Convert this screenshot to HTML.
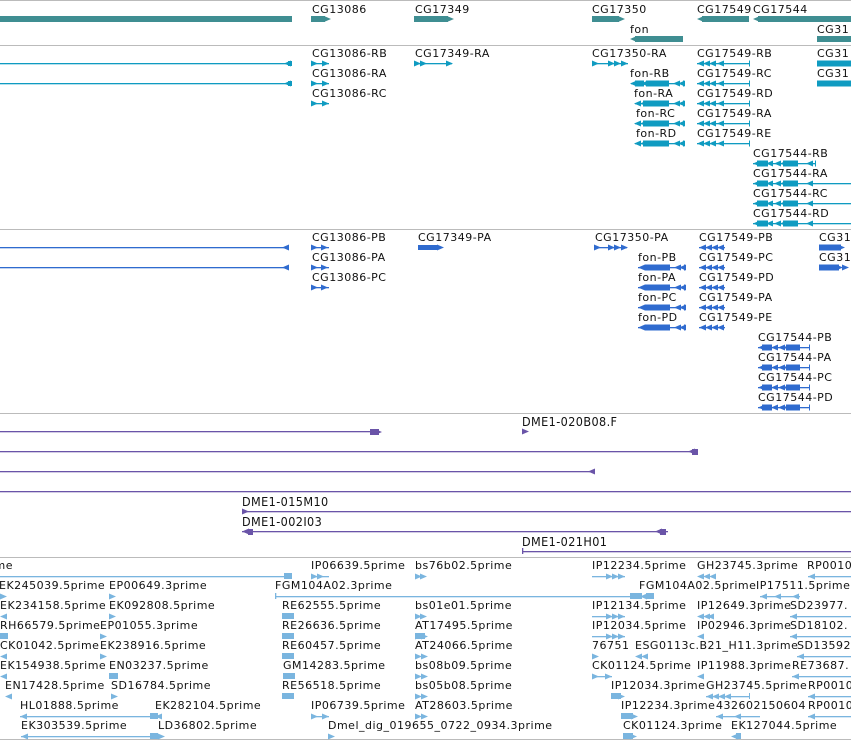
<!DOCTYPE html>
<html><head><meta charset="utf-8"><style>
html,body{margin:0;padding:0;background:#fff;width:851px;height:741px;overflow:hidden}
svg text{font-family:"DejaVu Sans","Liberation Sans",sans-serif;font-size:11px;fill:#111;letter-spacing:0.5px}
.p text{font-family:"DejaVu Sans Condensed","DejaVu Sans",sans-serif;font-stretch:condensed;font-size:12.5px;letter-spacing:0.4px}
</style></head><body>
<svg width="851" height="741" viewBox="0 0 851 741" xmlns="http://www.w3.org/2000/svg">
<defs>
<symbol id="ar" overflow="visible"><polygon points="0,-3 7,0 0,3"/></symbol>
<symbol id="al" overflow="visible"><polygon points="7,-3 0,0 7,3"/></symbol>
</defs>
<g fill="#bbb">
<rect x="0" y="0" width="851" height="1"/><rect x="0" y="45" width="851" height="1"/>
<rect x="0" y="229" width="851" height="1"/><rect x="0" y="413" width="851" height="1"/>
<rect x="0" y="557" width="851" height="1"/><rect x="0" y="739" width="851" height="1"/>
</g>

<g fill="#3f8e92">
<rect x="0" y="16" width="292" height="6"/>
<rect x="311" y="16" width="14" height="6"/><use href="#ar" x="324" y="19"/>
<rect x="414" y="16" width="34" height="6"/><use href="#ar" x="447" y="19"/>
<rect x="592" y="16" width="27" height="6"/><use href="#ar" x="618" y="19"/>
<use href="#al" x="697" y="19"/><rect x="702" y="16" width="47" height="6"/>
<use href="#al" x="753" y="19"/><rect x="758" y="16" width="93" height="6"/>
<use href="#al" x="630" y="39"/><rect x="635" y="36" width="48" height="6"/>
<rect x="817" y="36" width="34" height="6"/>
</g>
<text x="312" y="13">CG13086</text><text x="415" y="13">CG17349</text>
<text x="592" y="13">CG17350</text><text x="697" y="13">CG17549</text><text x="753" y="13">CG17544</text>
<text x="630" y="33">fon</text><text x="817" y="33">CG31</text>

<g fill="#0f9bc1" stroke="none">
<rect x="0" y="63" width="286" height="1.3"/><use href="#al" x="284" y="63.5"/><rect x="288" y="61" width="4" height="5"/>
<rect x="0" y="83" width="286" height="1.3"/><use href="#al" x="284" y="83.5"/><rect x="288" y="81" width="4" height="5"/>
<rect x="311" y="63" width="18" height="1.3"/><use href="#ar" x="311" y="63.5"/><use href="#ar" x="322" y="63.5"/>
<rect x="311" y="83" width="18" height="1.3"/><use href="#ar" x="311" y="83.5"/><use href="#ar" x="322" y="83.5"/>
<rect x="311" y="103" width="18" height="1.3"/><use href="#ar" x="311" y="103.5"/><use href="#ar" x="322" y="103.5"/>
<rect x="414" y="63" width="38" height="1.3"/><use href="#ar" x="414" y="63.5"/><use href="#ar" x="420" y="63.5"/><use href="#ar" x="446" y="63.5"/>
<rect x="592" y="63" width="36" height="1.3"/><use href="#ar" x="592" y="63.5"/><use href="#ar" x="608" y="63.5"/><use href="#ar" x="614" y="63.5"/><use href="#ar" x="621" y="63.5"/>
<g id="fonA">
<rect x="631" y="83" width="52" height="1.3"/><use href="#al" x="630" y="83.5"/><rect x="635" y="80.5" width="9" height="6"/><use href="#al" x="641" y="83.5"/><rect x="646" y="80.5" width="23" height="6"/><use href="#al" x="673" y="83.5"/><use href="#al" x="678" y="83.5"/><rect x="683" y="80.5" width="1" height="6"/>
</g>
<g id="fonB">
<rect x="635" y="103" width="49" height="1.3"/><use href="#al" x="634" y="103.5"/><rect x="643" y="100.5" width="26" height="6"/><use href="#al" x="640" y="103.5"/><use href="#al" x="673" y="103.5"/><use href="#al" x="678" y="103.5"/><rect x="683" y="100.5" width="1" height="6"/>
</g>
<use href="#fonB" y="20"/><use href="#fonB" y="40"/>
<g id="c549">
<rect x="697" y="63" width="53" height="1.3"/><use href="#al" x="697" y="63.5"/><use href="#al" x="703" y="63.5"/><use href="#al" x="709" y="63.5"/><use href="#al" x="717" y="63.5"/><rect x="749" y="60.5" width="1" height="6"/>
</g>
<use href="#c549" y="20"/><use href="#c549" y="40"/><use href="#c549" y="60"/><use href="#c549" y="80"/>
<g id="c544">
<use href="#al" x="753" y="163.5"/><rect x="757" y="160.5" width="11" height="6"/><rect x="753" y="163" width="62" height="1.3"/><use href="#al" x="766" y="163.5"/><use href="#al" x="774" y="163.5"/><rect x="783" y="160.5" width="15" height="6"/><use href="#al" x="780" y="163.5"/><use href="#al" x="806" y="163.5"/><rect x="815" y="160.5" width="1" height="6"/>
</g>
<g id="c544b">
<use href="#al" x="753" y="183.5"/><rect x="757" y="180.5" width="11" height="6"/><rect x="753" y="183" width="98" height="1.3"/><use href="#al" x="766" y="183.5"/><use href="#al" x="774" y="183.5"/><rect x="783" y="180.5" width="15" height="6"/><use href="#al" x="780" y="183.5"/><use href="#al" x="806" y="183.5"/>
</g>
<use href="#c544b" y="20"/><use href="#c544b" y="40"/>
<rect x="817" y="60.5" width="34" height="6"/><rect x="817" y="80.5" width="34" height="6"/>
</g>
<text x="312" y="57">CG13086-RB</text><text x="312" y="77">CG13086-RA</text><text x="312" y="97">CG13086-RC</text>
<text x="415" y="57">CG17349-RA</text><text x="592" y="57">CG17350-RA</text>
<text x="630" y="77">fon-RB</text><text x="634" y="97">fon-RA</text><text x="636" y="117">fon-RC</text><text x="636" y="137">fon-RD</text>
<text x="697" y="57">CG17549-RB</text><text x="697" y="77">CG17549-RC</text><text x="697" y="97">CG17549-RD</text><text x="697" y="117">CG17549-RA</text><text x="697" y="137">CG17549-RE</text>
<text x="753" y="157">CG17544-RB</text><text x="753" y="177">CG17544-RA</text><text x="753" y="197">CG17544-RC</text><text x="753" y="217">CG17544-RD</text>
<text x="817" y="57">CG31</text><text x="817" y="77">CG31</text>

<g fill="#2f6bcf">
<rect x="0" y="247" width="284" height="1.3"/><use href="#al" x="282" y="247.5"/>
<rect x="0" y="267" width="284" height="1.3"/><use href="#al" x="282" y="267.5"/>
<rect x="311" y="247" width="18" height="1.3"/><use href="#ar" x="311" y="247.5"/><use href="#ar" x="321" y="247.5"/>
<rect x="311" y="267" width="18" height="1.3"/><use href="#ar" x="311" y="267.5"/><use href="#ar" x="321" y="267.5"/>
<rect x="311" y="287" width="18" height="1.3"/><use href="#ar" x="311" y="287.5"/><use href="#ar" x="321" y="287.5"/>
<rect x="418" y="245" width="20" height="5"/><use href="#ar" x="437" y="247.5"/>
<rect x="594" y="247" width="33" height="1.3"/><use href="#ar" x="594" y="247.5"/><use href="#ar" x="608" y="247.5"/><use href="#ar" x="614" y="247.5"/><use href="#ar" x="621" y="247.5"/>
<g id="fonP"><rect x="638" y="267" width="46" height="1.3"/><use href="#al" x="638" y="267.5"/><rect x="645" y="264.5" width="25" height="6"/><use href="#al" x="674" y="267.5"/><use href="#al" x="679" y="267.5"/><rect x="684" y="264.5" width="1" height="6"/></g>
<use href="#fonP" y="20"/><use href="#fonP" y="40"/><use href="#fonP" y="60"/>
<g id="p549"><use href="#al" x="699" y="247.5"/><use href="#al" x="705" y="247.5"/><use href="#al" x="711" y="247.5"/><use href="#al" x="717" y="247.5"/><rect x="699" y="247" width="26" height="1.3"/></g>
<use href="#p549" y="20"/><use href="#p549" y="40"/><use href="#p549" y="60"/><use href="#p549" y="80"/>
<g id="p544"><use href="#al" x="758" y="347.5"/><rect x="762" y="344.5" width="10" height="6"/><rect x="758" y="347" width="51" height="1.3"/><use href="#al" x="771" y="347.5"/><use href="#al" x="778" y="347.5"/><rect x="786" y="344.5" width="14" height="6"/><use href="#al" x="783" y="347.5"/><rect x="809" y="344.5" width="1" height="6"/></g>
<use href="#p544" y="20"/><use href="#p544" y="40"/><use href="#p544" y="60"/>
<rect x="819" y="244.5" width="22" height="6"/><use href="#ar" x="838" y="247.5"/>
<rect x="819" y="264.5" width="20" height="6"/><use href="#ar" x="836" y="267.5"/><use href="#ar" x="842" y="267.5"/>
</g>
<text x="312" y="241">CG13086-PB</text><text x="312" y="261">CG13086-PA</text><text x="312" y="281">CG13086-PC</text>
<text x="418" y="241">CG17349-PA</text><text x="595" y="241">CG17350-PA</text>
<text x="638" y="261">fon-PB</text><text x="638" y="281">fon-PA</text><text x="638" y="301">fon-PC</text><text x="638" y="321">fon-PD</text>
<text x="699" y="241">CG17549-PB</text><text x="699" y="261">CG17549-PC</text><text x="699" y="281">CG17549-PD</text><text x="699" y="301">CG17549-PA</text><text x="699" y="321">CG17549-PE</text>
<text x="758" y="341">CG17544-PB</text><text x="758" y="361">CG17544-PA</text><text x="758" y="381">CG17544-PC</text><text x="758" y="401">CG17544-PD</text>
<text x="819" y="241">CG31</text><text x="819" y="261">CG31</text>

<g fill="#6a54a8">
<rect x="0" y="431" width="372" height="1.3"/><rect x="370" y="429" width="9" height="6"/><use href="#ar" x="375" y="432"/>
<use href="#ar" x="522" y="431.5"/>
<rect x="0" y="451" width="690" height="1.3"/><use href="#al" x="688" y="451.5"/><rect x="692" y="449" width="6" height="6"/>
<rect x="0" y="471" width="590" height="1.3"/><use href="#al" x="588" y="471.5"/>
<rect x="0" y="491" width="851" height="1.3"/>
<rect x="242" y="511" width="609" height="1.3"/><use href="#ar" x="242" y="511.5"/>
<rect x="242" y="531" width="426" height="1.3"/><use href="#al" x="242" y="531.5"/><rect x="248" y="529" width="5" height="6"/><use href="#al" x="655" y="531.5"/><rect x="660" y="529" width="6" height="6"/>
<rect x="522" y="551" width="329" height="1.3"/><rect x="522" y="548" width="1.3" height="6"/>
</g>
<g class="p">
<text x="522" y="426">DME1-020B08.F</text><text x="242" y="506">DME1-015M10</text>
<text x="242" y="526">DME1-002I03</text><text x="522" y="546">DME1-021H01</text>
</g>

<g fill="#7ab5df">
<rect x="0" y="576" width="286" height="1.3"/><rect x="284" y="573" width="8" height="6"/>
<use href="#ar" x="311" y="576.5"/><use href="#ar" x="317" y="576.5"/><rect x="311" y="576" width="18" height="1.3"/>
<use href="#ar" x="415" y="576.5"/><use href="#ar" x="420" y="576.5"/>
<rect x="592" y="576" width="33" height="1.3"/><use href="#ar" x="606" y="576.5"/><use href="#ar" x="612" y="576.5"/><use href="#ar" x="618" y="576.5"/>
<use href="#al" x="697" y="576.5"/><use href="#al" x="703" y="576.5"/><use href="#al" x="709" y="576.5"/>
<rect x="808" y="576" width="43" height="1.3"/><use href="#al" x="808" y="576.5"/>
<use href="#ar" x="0" y="596.5"/><use href="#ar" x="109" y="596.5"/>
<rect x="275" y="596" width="370" height="1.3"/><rect x="275" y="593" width="1.3" height="6"/><rect x="630" y="593" width="12" height="6"/><use href="#al" x="640" y="596.5"/><rect x="646" y="593" width="8" height="6"/>
<rect x="760" y="596" width="40" height="1.3"/><use href="#al" x="760" y="596.5"/><use href="#al" x="774" y="596.5"/><use href="#al" x="792" y="596.5"/>
<use href="#al" x="0" y="616.5"/><use href="#ar" x="109" y="616.5"/><rect x="282" y="613" width="12" height="6"/><use href="#ar" x="415" y="616.5"/><use href="#ar" x="420" y="616.5"/>
<rect x="592" y="616" width="33" height="1.3"/><use href="#ar" x="606" y="616.5"/><use href="#ar" x="612" y="616.5"/><use href="#ar" x="618" y="616.5"/>
<use href="#al" x="697" y="616.5"/><use href="#al" x="703" y="616.5"/><use href="#al" x="707" y="616.5"/><rect x="790" y="616" width="61" height="1.3"/><use href="#al" x="790" y="616.5"/>
<rect x="0" y="633" width="8" height="6"/><use href="#ar" x="100" y="636.5"/><rect x="282" y="633" width="12" height="6"/><use href="#ar" x="415" y="636.5"/><use href="#ar" x="421" y="636.5"/><rect x="415" y="633" width="10" height="6"/>
<rect x="592" y="636" width="33" height="1.3"/><use href="#ar" x="606" y="636.5"/><use href="#ar" x="612" y="636.5"/><use href="#ar" x="618" y="636.5"/>
<use href="#al" x="697" y="636.5"/><rect x="790" y="636" width="61" height="1.3"/><use href="#al" x="790" y="636.5"/>
<use href="#al" x="0" y="656.5"/><use href="#ar" x="100" y="656.5"/><rect x="282" y="653" width="12" height="6"/><use href="#ar" x="415" y="656.5"/><use href="#ar" x="421" y="656.5"/>
<use href="#ar" x="592" y="656.5"/><use href="#al" x="635" y="656.5"/><use href="#al" x="641" y="656.5"/><rect x="797" y="656" width="54" height="1.3"/><use href="#al" x="797" y="656.5"/>
<use href="#al" x="0" y="676.5"/><rect x="109" y="673" width="9" height="6"/><rect x="283" y="673" width="12" height="6"/><use href="#ar" x="415" y="676.5"/><use href="#ar" x="421" y="676.5"/>
<rect x="592" y="676" width="20" height="1.3"/><use href="#ar" x="592" y="676.5"/><use href="#ar" x="605" y="676.5"/><use href="#al" x="697" y="676.5"/><rect x="792" y="676" width="59" height="1.3"/><use href="#al" x="792" y="676.5"/>
<use href="#al" x="5" y="696.5"/><use href="#ar" x="111" y="696.5"/><rect x="282" y="693" width="12" height="6"/><use href="#ar" x="415" y="696.5"/><use href="#ar" x="421" y="696.5"/>
<rect x="611" y="693" width="10" height="6"/><use href="#ar" x="618" y="696.5"/><rect x="706" y="696" width="44" height="1.3"/><use href="#al" x="706" y="696.5"/><use href="#al" x="712" y="696.5"/><use href="#al" x="718" y="696.5"/><use href="#al" x="724" y="696.5"/><rect x="749" y="693" width="1" height="6"/><rect x="808" y="696" width="43" height="1.3"/><use href="#al" x="808" y="696.5"/>
<rect x="20" y="716" width="136" height="1.3"/><use href="#al" x="20" y="716.5"/><rect x="150" y="713" width="8" height="6"/><use href="#al" x="155" y="716.5"/>
<rect x="311" y="716" width="18" height="1.3"/><use href="#ar" x="311" y="716.5"/><use href="#ar" x="322" y="716.5"/><use href="#ar" x="415" y="716.5"/><use href="#ar" x="421" y="716.5"/>
<rect x="621" y="713" width="12" height="6"/><use href="#ar" x="631" y="716.5"/><rect x="716" y="716" width="44" height="1.3"/><use href="#al" x="716" y="716.5"/><use href="#al" x="734" y="716.5"/><rect x="808" y="716" width="43" height="1.3"/><use href="#al" x="808" y="716.5"/>
<rect x="21" y="736" width="136" height="1.3"/><use href="#al" x="21" y="736.5"/><rect x="150" y="733" width="8" height="6"/><use href="#ar" x="158" y="736.5"/>
<use href="#ar" x="328" y="736.5"/><rect x="623" y="733" width="10" height="6"/><use href="#ar" x="630" y="736.5"/><use href="#al" x="731" y="736.5"/><rect x="736" y="733" width="5" height="6"/>
</g>
<g>
<text x="13" y="569" text-anchor="end">rime</text>
<text x="311" y="569">IP06639.5prime</text><text x="415" y="569">bs76b02.5prime</text><text x="592" y="569">IP12234.5prime</text><text x="697" y="569">GH23745.3prime</text><text x="807" y="569">RP0010</text>
<text x="-1" y="589">EK245039.5prime</text><text x="109" y="589">EP00649.3prime</text><text x="275" y="589">FGM104A02.3prime</text><text x="639" y="589">FGM104A02.5prime</text><text x="756" y="589">IP17511.5prime</text>
<text x="0" y="609">EK234158.5prime</text><text x="109" y="609">EK092808.5prime</text><text x="282" y="609">RE62555.5prime</text><text x="415" y="609">bs01e01.5prime</text><text x="592" y="609">IP12134.5prime</text><text x="697" y="609">IP12649.3prime</text><text x="790" y="609">SD23977.</text>
<text x="0" y="629">RH66579.5prime</text><text x="100" y="629">EP01055.3prime</text><text x="282" y="629">RE26636.5prime</text><text x="415" y="629">AT17495.5prime</text><text x="592" y="629">IP12034.5prime</text><text x="697" y="629">IP02946.3prime</text><text x="790" y="629">SD18102.</text>
<text x="0" y="649">CK01042.5prime</text><text x="100" y="649">EK238916.5prime</text><text x="282" y="649">RE60457.5prime</text><text x="415" y="649">AT24066.5prime</text><text x="592" y="649">76751</text><text x="635" y="649">ESG0113c.B21_H11.3prime</text><text x="797" y="649">SD13592</text>
<text x="0" y="669">EK154938.5prime</text><text x="109" y="669">EN03237.5prime</text><text x="283" y="669">GM14283.5prime</text><text x="415" y="669">bs08b09.5prime</text><text x="592" y="669">CK01124.5prime</text><text x="697" y="669">IP11988.3prime</text><text x="792" y="669">RE73687.</text>
<text x="5" y="689">EN17428.5prime</text><text x="111" y="689">SD16784.5prime</text><text x="282" y="689">RE56518.5prime</text><text x="415" y="689">bs05b08.5prime</text><text x="611" y="689">IP12034.3prime</text><text x="706" y="689">GH23745.5prime</text><text x="808" y="689">RP0010</text>
<text x="20" y="709">HL01888.5prime</text><text x="155" y="709">EK282104.5prime</text><text x="311" y="709">IP06739.5prime</text><text x="415" y="709">AT28603.5prime</text><text x="621" y="709">IP12234.3prime</text><text x="716" y="709">432602150604</text><text x="808" y="709">RP0010</text>
<text x="21" y="729">EK303539.5prime</text><text x="158" y="729">LD36802.5prime</text><text x="328" y="729">Dmel_dig_019655_0722_0934.3prime</text><text x="623" y="729">CK01124.3prime</text><text x="731" y="729">EK127044.5prime</text>
</g>
</svg>
</body></html>
